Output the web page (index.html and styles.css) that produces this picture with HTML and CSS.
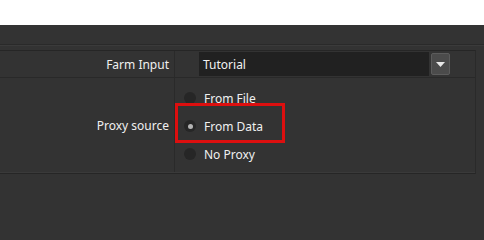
FILE: index.html
```html
<!DOCTYPE html>
<html>
<head>
<meta charset="utf-8">
<link rel="stylesheet" href="styles.css">
</head>
<body>
<div class="top"></div>
<div class="toolbar"></div>
<div class="spacer"></div>
<div class="grid">
  <div class="row row-farm">
    <div class="label">Farm Input</div>
    <div class="value">
      <div class="combo">
        <div class="combo-field">Tutorial</div>
        <div class="combo-btn"><svg width="9" height="5" viewBox="0 0 9 5"><path d="M0 0H9L4.5 5Z" fill="#e8e8e8"/></svg></div>
      </div>
    </div>
  </div>
  <div class="row row-proxy">
    <div class="label">Proxy source</div>
    <div class="value radios">
      <div class="radio"><span class="dot"></span><span>From File</span></div>
      <div class="radio checked"><span class="dot"></span><span>From Data</span></div>
      <div class="radio"><span class="dot"></span><span>No Proxy</span></div>
      <div class="highlight"></div>
    </div>
  </div>
</div>
</body>
</html>
```
FILE: styles.css
```css
html {
  background: #333333;
}
html, body {
  margin: 0;
  padding: 0;
}
body {
  background: #333333;
  font-family: "Noto Sans", "Open Sans", sans-serif;
  font-size: 12px;
  color: #f0f0f0;
  width: 484px;
  min-height: 100vh;
}
.top {
  height: 25px;
  background: #ffffff;
}
.toolbar {
  height: 19px;
  background: #333333;
  border-bottom: 1px solid #2a2a2a;
}
.spacer {
  height: 4px;
  border-top: 1px solid #3b3b3b;
}
.grid {
  width: 475px;
  border-top: 1px solid #262626;
  border-right: 1px solid #2a2a2a;
  border-bottom: 1px solid #262626;
}
.row {
  display: flex;
}
.row-farm {
  height: 26px;
  border-bottom: 1px solid #292929;
}
.row-proxy {
  height: 94px;
  border-bottom: 1px solid #3a3a3a;
}
.label {
  width: 169px;
  padding-right: 5px;
  border-right: 1px solid #2a2a2a;
  display: flex;
  align-items: center;
  justify-content: flex-end;
  white-space: nowrap;
}
.value {
  flex: 1;
  position: relative;
}
.row-farm .value {
  display: flex;
  align-items: center;
  padding-left: 24px;
}
.combo {
  display: flex;
  align-items: center;
  gap: 2px;
}
.combo-field {
  width: 226px;
  height: 24px;
  padding-left: 4px;
  background: #212121;
  display: flex;
  align-items: center;
  color: #f2f2f2;
}
.combo-btn {
  width: 17px;
  height: 20px;
  border: 1px solid #5c5c5c;
  border-radius: 2px;
  background: #4b4b4b;
  display: flex;
  align-items: center;
  justify-content: center;
}
.radios {
  display: flex;
  flex-direction: column;
  padding-top: 6px;
  padding-left: 9px;
}
.radio {
  height: 28px;
  display: flex;
  align-items: center;
  gap: 8px;
}
.dot {
  width: 12px;
  height: 12px;
  border-radius: 50%;
  background: #262626;
  display: flex;
  align-items: center;
  justify-content: center;
}
.checked .dot::after {
  content: "";
  width: 5px;
  height: 5px;
  border-radius: 50%;
  background: #b4b4b4;
}
.highlight {
  position: absolute;
  left: 0;
  top: 25px;
  width: 104px;
  height: 34px;
  border: 3px solid #dd0f0f;
}
```
